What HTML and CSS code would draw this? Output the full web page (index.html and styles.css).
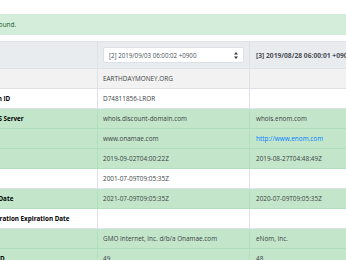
FILE: index.html
```html
<!DOCTYPE html>
<html lang="en">
<head>
  <meta charset="UTF-8">
  <meta name="viewport" content="width=device-width, initial-scale=1.0">
  <title>Whois History</title>
  <link rel="stylesheet" href="styles.css">
</head>
<body>
  <div class="page">
    <div class="alert">3 records found.</div>
    <table class="diff">
      <thead>
        <tr>
          <th class="key"></th>
          <th>
            <div class="select">
              <span>[2] 2019/09/03 06:00:02 +0900</span>
              <svg width="4" height="7" viewBox="0 0 4 7"><path d="M2 0L4 2.5H0Z M2 7L4 4.5H0Z" fill="#343a40"/></svg>
            </div>
          </th>
          <th class="rev">[3] 2019/08/28 06:00:01 +0900</th>
        </tr>
      </thead>
      <tbody>
        <tr><th class="key">Domain Name</th><td>EARTHDAYMONEY.ORG</td><td></td></tr>
        <tr><th class="key">Registry Domain ID</th><td>D74811856-LROR</td><td></td></tr>
        <tr class="changed"><th class="key">Registrar WHOIS Server</th><td>whois.discount-domain.com</td><td>whois.enom.com</td></tr>
        <tr class="changed"><th class="key">Registrar URL</th><td>www.onamae.com</td><td><a href="#">http://www.enom.com</a></td></tr>
        <tr class="changed"><th class="key">Updated Date</th><td>2019-09-02T04:00:22Z</td><td>2019-08-27T04:48:49Z</td></tr>
        <tr><th class="key">Creation Date</th><td>2001-07-09T09:05:35Z</td><td></td></tr>
        <tr class="changed"><th class="key">Registry Expiry Date</th><td>2021-07-09T09:05:35Z</td><td>2020-07-09T09:05:35Z</td></tr>
        <tr><th class="key">Registrar Registration Expiration Date</th><td></td><td></td></tr>
        <tr class="changed"><th class="key">Registrar</th><td>GMO Internet, Inc. d/b/a Onamae.com</td><td>eNom, Inc.</td></tr>
        <tr class="changed"><th class="key">Registrar IANA ID</th><td>49</td><td>48</td></tr>
      </tbody>
    </table>
  </div>
</body>
</html>
```

FILE: styles.css
```css
body {
  margin: 0;
  background-color: #fff;
  color: #212529;
  font-family: "Open Sans", Arial, sans-serif;
  font-size: 6.4px;
  line-height: 11px;
}
.page {
  margin-left: -60px;
  width: 480px;
  padding-top: 14px;
}
.alert {
  background-color: #d4edda;
  color: #155724;
  padding: 5px 8px 5px 27px;
  height: 11px;
  margin-bottom: 6px;
}
.diff {
  width: 100%;
  border-collapse: collapse;
  table-layout: fixed;
}
.diff th, .diff td {
  border: 1px solid #dee2e6;
  padding: 4px 5px;
  text-align: left;
  vertical-align: middle;
  white-space: nowrap;
  overflow: hidden;
}
.diff td:nth-child(3) {
  padding-left: 6px;
}
.diff th.key {
  width: 142px;
  padding-left: 9px;
  font-size: 6.3px;
  font-weight: bold;
  color: #000;
}
.diff thead th {
  background-color: #e9ecef;
  color: #495057;
  padding: 5px 5px;
  height: 16px;
}
.diff thead th:nth-child(2) {
  width: 141px;
}
.diff thead .rev {
  font-size: 6.7px;
  font-weight: bold;
  padding-left: 6px;
}
.select {
  display: flex;
  align-items: center;
  justify-content: space-between;
  height: 14px;
  padding: 0 5px;
  background-color: #fff;
  border: 1px solid #dde1e5;
  border-radius: 2px;
  color: #495057;
  font-size: 6.2px;
  font-weight: normal;
}
.diff tbody tr:nth-child(odd) {
  background-color: #f2f2f2;
}
.diff tbody td {
  color: #3a3f44;
}
.diff tbody tr.changed {
  background-color: #c3e6cb;
}
.diff tbody tr.changed th, .diff tbody tr.changed td {
  border-color: #b1dfbb;
}
a {
  color: #007bff;
  text-decoration: none;
}
```
